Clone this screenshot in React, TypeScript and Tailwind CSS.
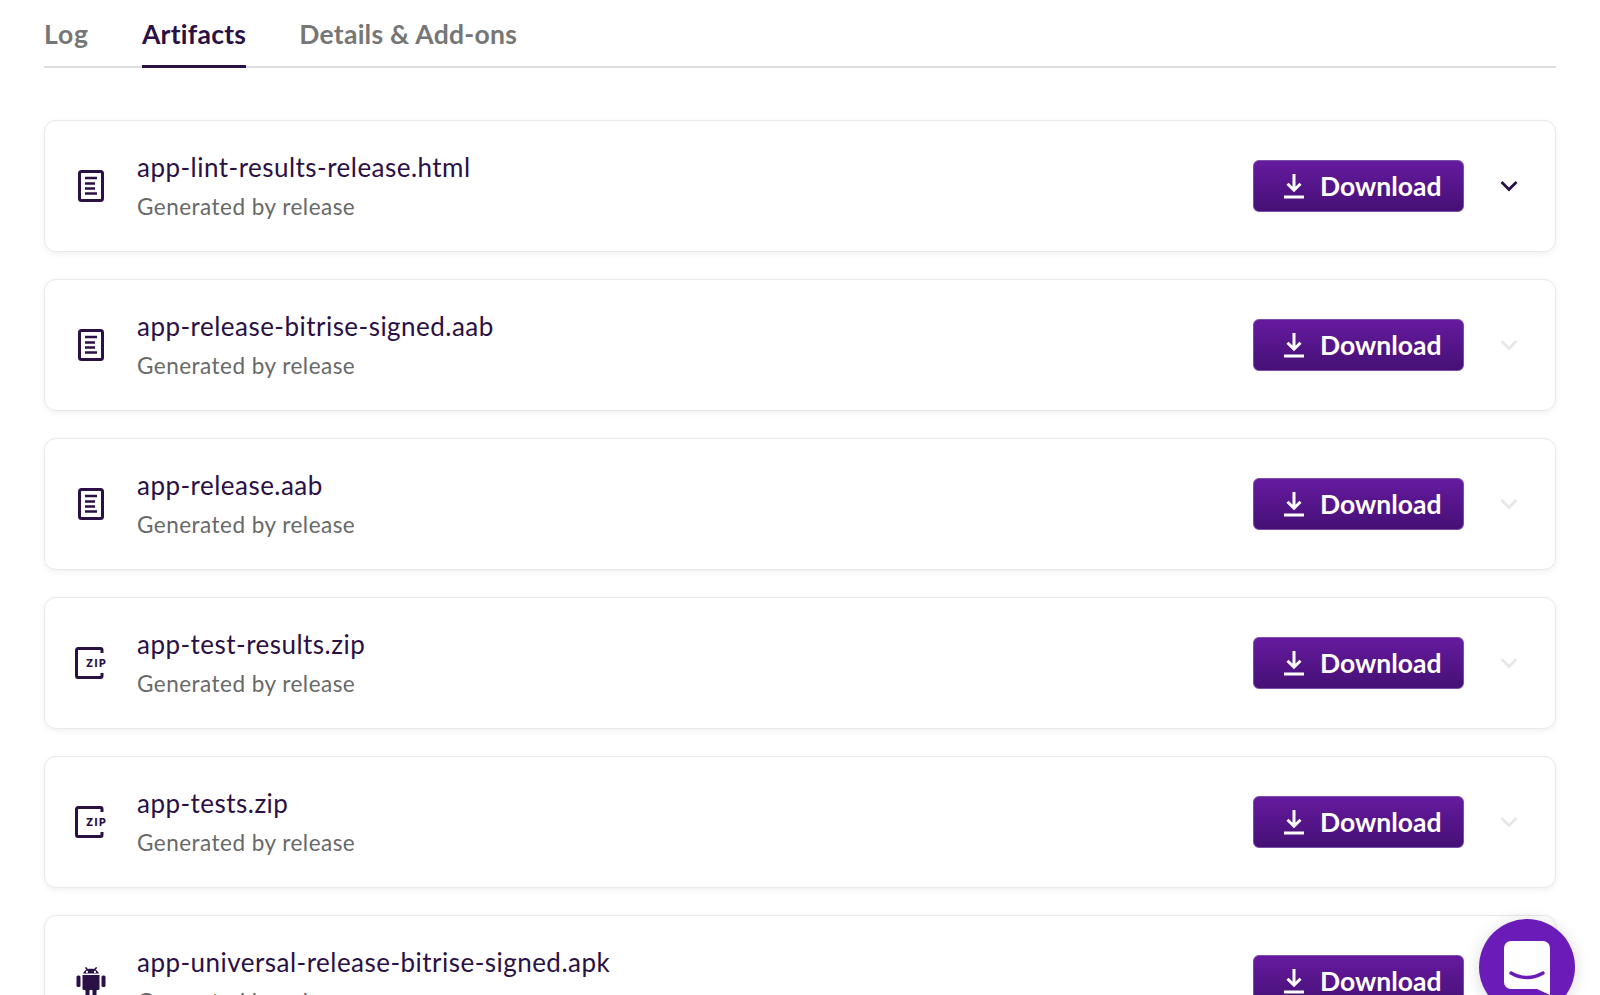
import React from 'react';

type IconKind = 'doc' | 'zip' | 'android';

const artifacts: { name: string; icon: IconKind }[] = [
    { name: 'app-lint-results-release.html', icon: 'doc' },
    { name: 'app-release-bitrise-signed.aab', icon: 'doc' },
    { name: 'app-release.aab', icon: 'doc' },
    { name: 'app-test-results.zip', icon: 'zip' },
    { name: 'app-tests.zip', icon: 'zip' },
    { name: 'app-universal-release-bitrise-signed.apk', icon: 'android' },
];

const DocIcon = () => (
    <svg width="26" height="32" viewBox="0 0 26 32" fill="none" stroke="#2b1045" strokeWidth="3">
        <rect x="1.5" y="1.5" width="23" height="29" rx="2" />
        <path d="M7 8h12M7 13.500h10M7 18.500h10M7 23.500h12" strokeWidth="2.6" />
    </svg>
);

const ZipIcon = () => (
    <svg width="33" height="32" viewBox="0 0 33 32" fill="none">
        <path d="M27 6V3a1.500 1.500 0 0 0-1.500-1.500H3A1.500 1.500 0 0 0 1.500 3v26A1.500 1.500 0 0 0 3 30.500h22.500A1.500 1.500 0 0 0 27 29v-3" stroke="#2b1045" strokeWidth="3" />
        <text x="11" y="20" fill="#2b1045" fontSize="10.500" fontWeight="800" letterSpacing="1.400" fontFamily="Inter, sans-serif">ZIP</text>
    </svg>
);

const AndroidIcon = () => (
    <svg width="30" height="29" viewBox="0 0 30 29" fill="#2b1045">
        <path d="M7 6.500C7.800 4.600 9 3.400 10.400 2.700L8.800.7l1.300-.7 1.800 2.100c2-.6 4.200-.6 6.200 0L20 0l1.300.7-1.700 2c1.400.7 2.600 1.900 3.400 3.800zM11 3.800a1.100 1.100 0 1 0 0 2.200 1.100 1.100 0 0 0 0-2.200zm8 0a1.100 1.100 0 1 0 0 2.200 1.100 1.100 0 0 0 0-2.200z" fillRule="evenodd" />
        <path d="M6.500 8h17v13.500a1.500 1.500 0 0 1-1.500 1.500H8a1.500 1.500 0 0 1-1.500-1.500z" />
        <rect x="0.500" y="8.500" width="4" height="11.500" rx="1.500" />
        <rect x="25.500" y="8.500" width="4" height="11.500" rx="1.500" />
        <rect x="9.500" y="22" width="4" height="7" rx="1.200" />
        <rect x="16.500" y="22" width="4" height="7" rx="1.200" />
    </svg>
);

const DownloadIcon = () => (
    <svg width="20" height="26" viewBox="0 0 20 26" fill="none" stroke="#fff" strokeWidth="3">
        <path d="M10 1v16M3.500 10.800 10 17.200l6.500-6.400" />
        <path d="M0 24h20" />
    </svg>
);

const Chevron = ({ active }: { active: boolean }) => (
    <svg width="18" height="12" viewBox="0 0 18 12" fill="none" stroke={active ? '#2b1045' : '#e8e6ea'} strokeWidth="2.8">
        <path d="M1.500 2 9 9.500 16.500 2" />
    </svg>
);

const ArtifactCard = ({ name, icon, active }: { name: string; icon: IconKind; active: boolean }) => (
    <div className="flex h-[132px] shrink-0 items-center rounded-xl border border-[#e9e9e9] bg-white shadow-[0_2px_6px_rgba(0,0,0,0.06)]">
        <div className="flex w-[92px] shrink-0 justify-center">
            {icon === 'doc' && <DocIcon />}
            {icon === 'zip' && <ZipIcon />}
            {icon === 'android' && <AndroidIcon />}
        </div>
        <div className="flex-1 pt-[2px]">
            <div className="text-[26px] leading-[40px] tracking-[0.47px] text-[#2b1045]">{name}</div>
            <div className="text-[22.5px] leading-[40px] tracking-[0.48px] text-[#686868]">Generated by release</div>
        </div>
        <button className="flex h-[52px] w-[211px] items-center gap-[16px] rounded-md border border-[#7a4fa6] bg-gradient-to-b from-[#661a9f] to-[#451075] pl-[30px] text-[26.5px] font-bold text-white">
            <DownloadIcon />
            <span className="pt-[2px]">Download</span>
        </button>
        <div className="flex w-[91px] shrink-0 justify-center pr-[2px]">
            <Chevron active={active} />
        </div>
    </div>
);

export default function App() {
    return (
        <div className="relative h-[995px] overflow-hidden bg-white px-[44px] font-['Lato',sans-serif]">
            <div className="flex h-[68px] gap-[53px] border-b-2 border-[#dedede] text-[26.5px] font-bold tracking-[0.26px]">
                <div className="pt-[15px] tracking-[0.9px] text-[#767676]">Log</div>
                <div className="h-[68px] border-b-[3px] border-[#2b1045] pt-[15px] text-[#2b1045]">Artifacts</div>
                <div className="pt-[15px] text-[#767676]">Details &amp; Add-ons</div>
            </div>
            <div className="mt-[52px] flex flex-col gap-[27px]">
                {artifacts.map((a, i) => (
                    <ArtifactCard key={a.name} name={a.name} icon={a.icon} active={i === 0} />
                ))}
            </div>
            <div className="absolute left-[1479px] top-[919px] flex h-[96px] w-[96px] justify-center rounded-full bg-[#6a1bb8] pt-[22px] shadow-[0_2px_16px_rgba(0,0,0,0.15)]">
                <svg width="46" height="54" viewBox="0 0 46 54" fill="#fff">
                    <path d="M7 0h32a7 7 0 0 1 7 7v47l-13-6H7a7 7 0 0 1-7-7V7a7 7 0 0 1 7-7z" />
                    <path d="M7 32c10 6 22 6 32 0" stroke="#6a1bb8" strokeWidth="3.400" strokeLinecap="round" fill="none" />
                </svg>
            </div>
        </div>
    );
}
